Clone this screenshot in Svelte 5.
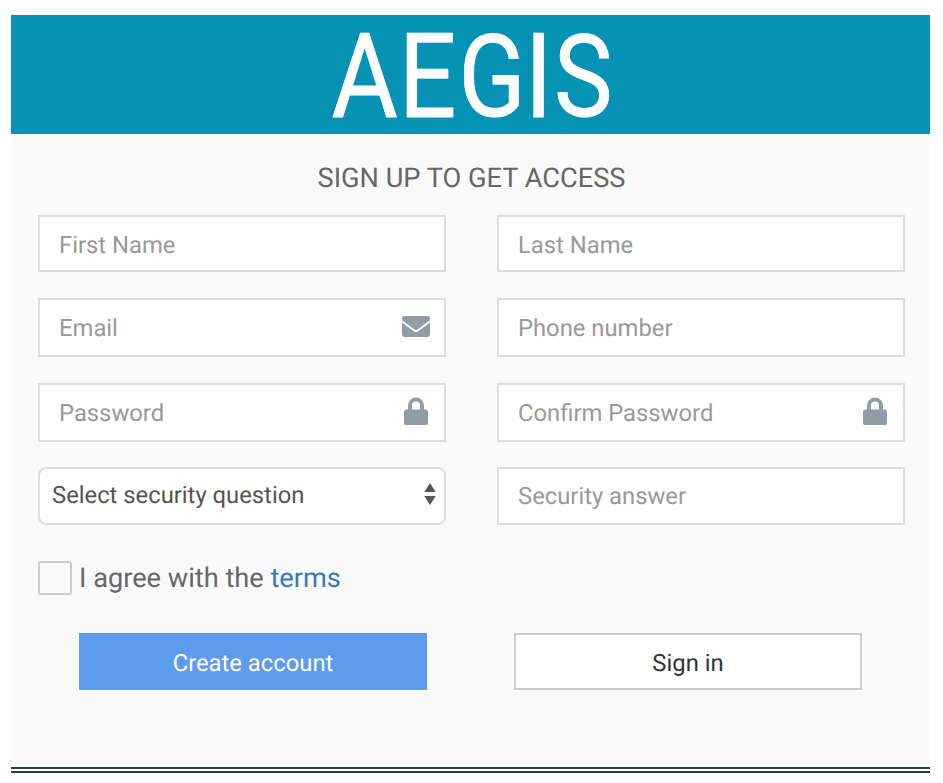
<script>
  const rows = [
    { height: 57, fields: [{ label: 'First Name' }, { label: 'Last Name' }] },
    { height: 59, fields: [{ label: 'Email', icon: 'mail' }, { label: 'Phone number' }] },
    { height: 59, fields: [{ label: 'Password', icon: 'lock' }, { label: 'Confirm Password', icon: 'lock' }] }
  ];
</script>

<main>
  <header>
    <svg class="logo" width="300" height="119" viewBox="0 0 300 119" role="img" aria-label="AEGIS">
      <text transform="scale(.86 1)" x="13.4 91.6 161.1 238 272" y="101.5">AE<tspan class="round" dy="-1">G</tspan><tspan dy="1">I</tspan><tspan class="round" dy="-1">S</tspan></text>
    </svg>
  </header>

  <form onsubmit={(e) => e.preventDefault()}>
    <h1>SIGN UP TO GET ACCESS</h1>

    <div class="rows">
      {#each rows as row}
        <div class="row" style="height: {row.height}px">
          {#each row.fields as field}
            <div class="field">
              <input type={field.icon === 'lock' ? 'password' : 'text'} placeholder={field.label} aria-label={field.label} />
              {#if field.icon === 'mail'}
                <svg width="28" height="21" viewBox="0 0 28 21">
                  <path d="M3 0H25Q28 0 28 3V4.2L15.8 13.3Q14 14.6 12.2 13.3L0 4.2V3Q0 0 3 0Z" />
                  <path d="M0 6.6L11.4 15.1Q14 17 16.6 15.1L28 6.6V18Q28 21 25 21H3Q0 21 0 18Z" />
                </svg>
              {:else if field.icon === 'lock'}
                <svg class="lock" width="24" height="28" viewBox="0 0 24 28">
                  <path fill-rule="evenodd" d="M4 12.5V8.7A8 8.2 0 0 1 20 8.7V12.5H21.4Q24 12.5 24 15.1V25.4Q24 28 21.4 28H2.6Q0 28 0 25.4V15.1Q0 12.5 2.6 12.5ZM8 12.5H16V8.7A4 4.2 0 0 0 8 8.7Z" />
                </svg>
              {/if}
            </div>
          {/each}
        </div>
      {/each}
      <div class="row last">
        <div class="field select">
          <span>Select security question</span>
          <svg width="12" height="22" viewBox="0 0 12 22">
            <path d="M6 0L11.7 9H.3ZM6 22L.3 13H11.7Z" />
          </svg>
        </div>
        <div class="field">
          <input type="text" placeholder="Security answer" aria-label="Security answer" />
        </div>
      </div>
    </div>

    <label class="agree">
      <input type="checkbox" />
      <span>I agree with the <a href="#terms">terms</a></span>
    </label>

    <div class="actions">
      <button class="primary" type="submit">Create account</button>
      <button class="secondary" type="button">Sign in</button>
    </div>
  </form>
  <div class="rule"></div>
</main>

<style>
  :global(body) { background: #fff; }
  * { box-sizing: border-box; }
  main {
    width: 943px;
    height: 783px;
    padding: 15px 13px 0 11px;
    font-family: Roboto, "Liberation Sans", sans-serif;
    text-rendering: geometricPrecision;
  }
  header {
    height: 119px;
    background: #0592b5;
    padding-left: 309px;
  }
  .logo { display: block; overflow: visible; }
  .logo text { font-size: 118px; fill: #fff; stroke: #fff; stroke-width: .8; stroke-linejoin: round; }
  .logo .round { font-size: 114.5px; }
  form {
    height: 633px;
    background: #fafafa;
    padding: 28px 25px 0 27px;
  }
  h1 {
    margin: 0 0 21px;
    height: 32px;
    font-size: 27.2px;
    line-height: 32px;
    font-weight: 400;
    color: #666;
    text-align: center;
  }
  .rows { display: flex; flex-direction: column; gap: 26px; }
  .row { display: flex; gap: 51px; }
  .row.last { height: 58px; margin-top: -1px; }
  .field {
    width: 408px;
    height: 100%;
    display: flex;
    align-items: center;
    border: 2px solid #ddd;
    background: #fff;
    padding: 0 14px 0 19px;
  }
  .field input {
    flex: 1;
    min-width: 0;
    height: 100%;
    border: 0;
    outline: 0;
    padding: 0;
    background: transparent;
    font: 400 23.8px Roboto, sans-serif;
    text-rendering: geometricPrecision;
    color: #555;
  }
  .row:first-child input { padding-top: 2px; }
  .field input::placeholder { color: #999; opacity: 1; }
  .field svg { fill: #909da6; margin-bottom: 3px; }
  .field .lock { margin-right: 2px; margin-bottom: 4px; }
  .field.select {
    justify-content: space-between;
    border-radius: 8px;
    padding: 0 8px 0 12px;
    font-size: 23.8px;
    color: #555;
  }
  .field.select span { padding-bottom: 2px; }
  .field.select svg { fill: #555; margin-bottom: 4px; }
  .agree {
    display: flex;
    align-items: center;
    gap: 7px;
    margin-top: 36px;
    height: 34px;
    font-size: 27.2px;
    color: #666;
  }
  .agree input {
    appearance: none;
    width: 34px;
    height: 34px;
    margin: 0;
    border: 2px solid #ccc;
    border-radius: 3px;
    background: #fafafa;
  }
  .agree a { color: #337ab7; text-decoration: none; }
  .actions {
    display: flex;
    gap: 87px;
    margin: 38px 0 0 41px;
  }
  button {
    width: 348px;
    height: 57px;
    padding: 2px 0 0;
    font: 400 23.8px Roboto, sans-serif;
    text-rendering: geometricPrecision;
    border-radius: 0;
  }
  .primary { border: 0; background: #5d9cec; color: #fff; }
  .secondary { border: 2px solid #ccc; background: #fff; color: #333; }
  .rule {
    height: 6px;
    border-top: 2px solid #2f3b45;
    border-bottom: 2px solid #2f3b45;
  }
</style>
